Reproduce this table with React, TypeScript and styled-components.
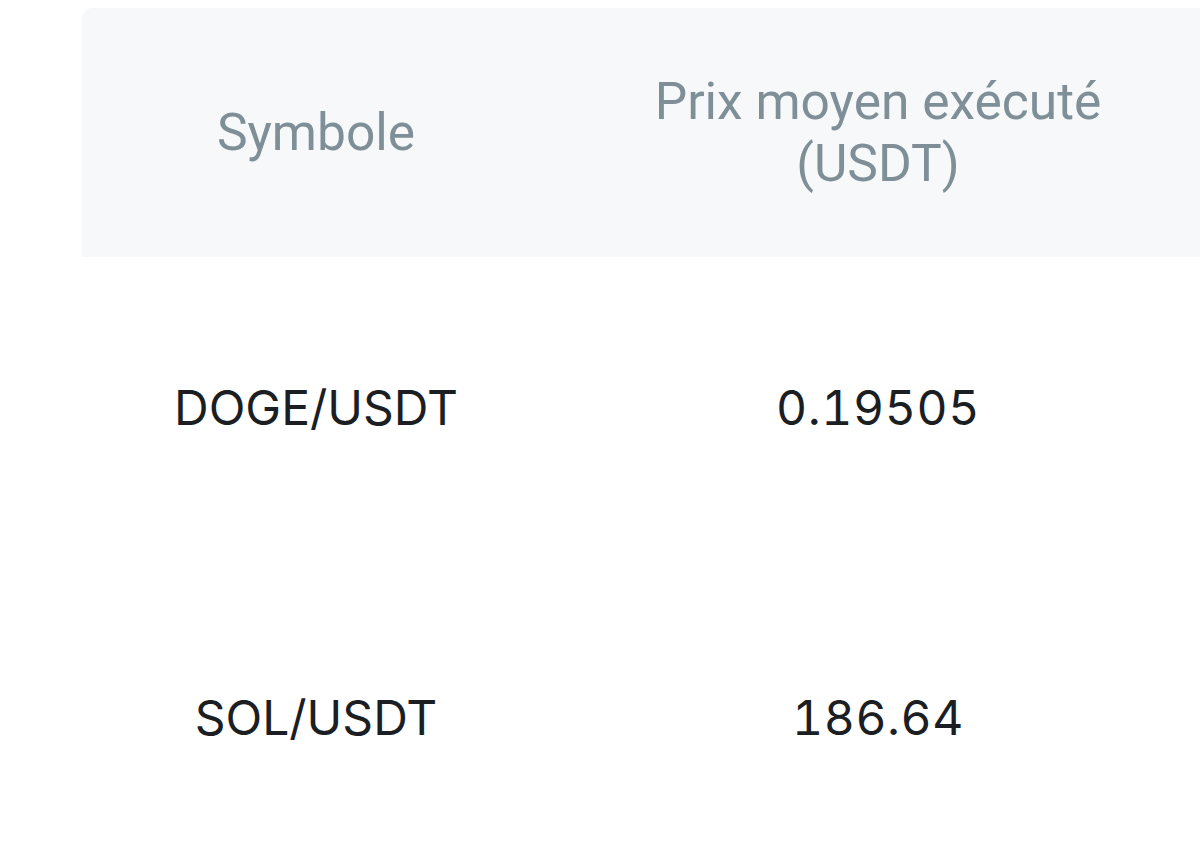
import styled, { createGlobalStyle } from "styled-components";

const GlobalStyle = createGlobalStyle`
  html, body {
    margin: 0;
    padding: 0;
    background: #ffffff;
    overflow: hidden;
  }
  body {
    font-family: Inter, "Noto Sans", sans-serif;
  }
`;

// page wrapper, table starts a bit off the left edge
const Page = styled.div`
  width: 1200px;
  height: 845px;
  padding: 8px 0 0 82px;
  box-sizing: border-box;
  overflow: hidden;
`;

const Table = styled.div`
  display: grid;
  grid-template-columns: 468px 656px;
  width: 1124px;
`;

const HeadCell = styled.div<{ $first?: boolean }>`
  height: 249px;
  display: flex;
  align-items: center;
  justify-content: center;
  text-align: center;
  background: #f6f8fa;
  color: #7f8f98;
  font-family: Roboto, "Liberation Sans", sans-serif;
  font-size: 51.5px;
  line-height: 62px;
  border-top-left-radius: ${(p) => (p.$first ? "10px" : "0")};
`;

const Cell = styled.div<{ $numeric?: boolean }>`
  height: 310px;
  box-sizing: border-box;
  padding-top: 121px;
  display: flex;
  justify-content: center;
  color: #1b1e22;
  font-size: 48px;
  line-height: 60px;
  letter-spacing: ${(p) => (p.$numeric ? "0.6px" : "0")};
  font-variant-numeric: ${(p) => (p.$numeric ? "tabular-nums" : "normal")};
`;

const rows = [
  { symbol: "DOGE/USDT", price: "0.19505" },
  { symbol: "SOL/USDT", price: "186.64" },
];

export default function App() {
  return (
    <>
      <GlobalStyle />
      <Page>
        <Table>
          <HeadCell $first>Symbole</HeadCell>
          <HeadCell>
            Prix moyen exécuté
            <br />
            (USDT)
          </HeadCell>
          {rows.map((r) => [
            <Cell key={r.symbol}>{r.symbol}</Cell>,
            <Cell key={r.price} $numeric>
              {r.price}
            </Cell>,
          ])}
        </Table>
      </Page>
    </>
  );
}
